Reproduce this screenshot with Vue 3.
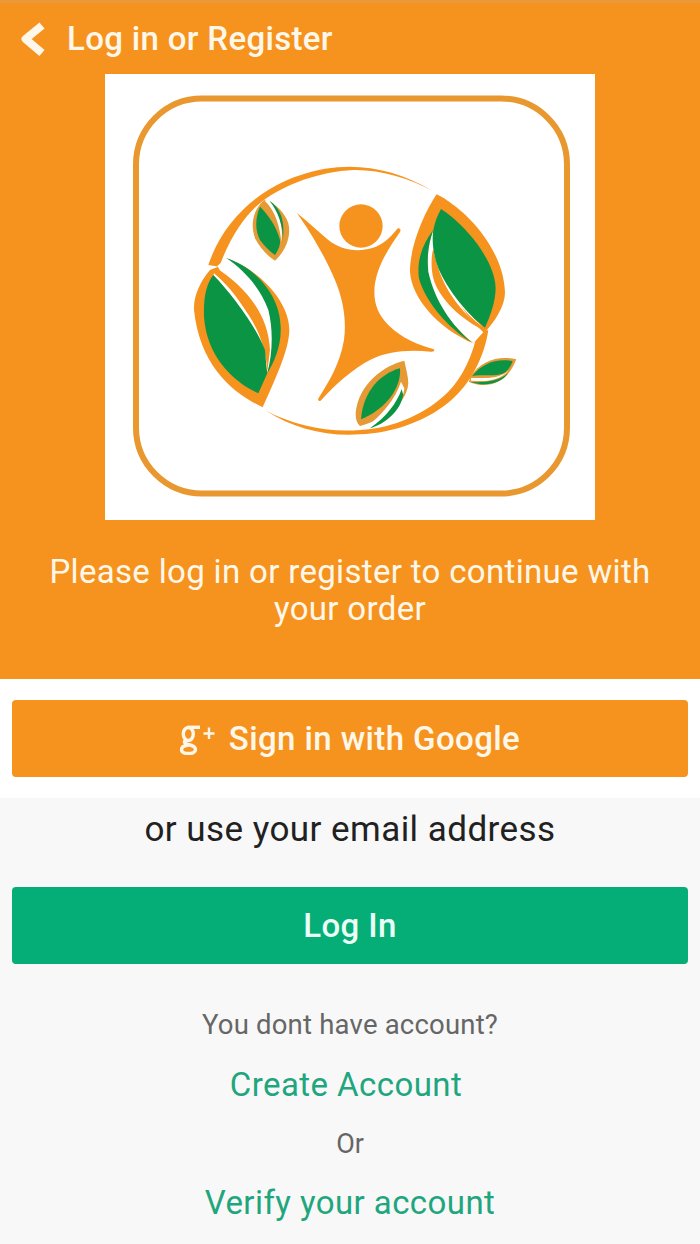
<template>
  <div class="screen">
    <header class="hero">
      <div class="topbar">
        <svg class="back" viewBox="0 0 28 40" aria-hidden="true">
          <path d="M22 6.500 L5.500 20 L22 34" />
        </svg>
        <span class="title">Log in or Register</span>
      </div>

      <svg class="logo" viewBox="0 0 490 446" aria-hidden="true">
        <rect width="490" height="446" fill="#ffffff" />
        <rect x="31" y="24.5" width="431" height="395" rx="66" fill="none" stroke="#e9982f" stroke-width="6" />
        <g transform="translate(75 76) scale(0.3333)">
          <!-- ring -->
          <path class="orange" d="M757 122 C680 75 590 50 510 50 C340 50 150 150 85 345 L118 350 C150 260 200 190 245 155 C320 100 420 65 520 60 C600 58 690 85 757 122 Z" />
          <path class="orange" d="M925 540 C915 610 880 690 820 745 C750 810 640 850 540 853 C440 860 340 835 258 782 C340 825 440 848 540 840 C640 835 740 790 805 725 C850 680 880 610 892 548 Z" />

          <!-- figure -->
          <circle class="orange" cx="543" cy="228" r="65" />
          <path class="orange" d="M350 188 C385 215 415 245 445 270 C480 298 520 305 560 298 C600 292 630 265 652 236 C660 232 664 240 660 246 C630 290 595 340 585 400 C578 450 590 490 625 525 C665 565 715 585 762 598 C765 604 760 606 752 605 C680 598 620 605 570 630 C520 655 465 705 422 752 C416 755 412 750 416 744 C450 690 480 640 492 570 C500 510 490 450 465 390 C440 330 395 250 350 188 Z" />

          <!-- left leaf -->
          <g transform="translate(30 300)">
            <path class="orange" d="M60 60 L84 50 L110 25 C200 55 298 150 298 240 C298 300 250 400 218 472 C130 430 30 350 12 180 C10 140 30 95 60 60 Z" />
            <path class="white" d="M82 48 C95 38 100 30 110 25 C180 65 240 130 248 230 C250 290 245 330 232 368 L200 250 Z" />
            <path class="orange" d="M80 55 C150 100 235 180 240 300 L232 365 C228 290 200 220 150 160 C120 125 90 90 70 72 Z" />
            <path class="white" d="M72 70 C120 110 200 200 230 345 C205 240 130 140 70 76 Z" />
            <path class="green" d="M70 75 C100 105 190 210 225 300 C228 330 228 340 232 370 L205 430 C130 395 50 320 42 200 C40 140 50 100 70 75 Z" />
            <path class="green" d="M110 25 C190 50 270 130 272 230 C275 290 250 340 232 370 C248 310 250 240 235 180 C210 110 160 60 110 25 Z" />
          </g>

          <!-- right leaf -->
          <g transform="translate(675 105)">
            <path class="orange" d="M95 28 C180 70 295 190 300 320 C302 360 270 410 240 442 L205 475 C100 430 20 340 15 260 C15 180 60 80 95 28 Z" />
            <path class="white" d="M85 135 C62 200 62 260 80 310 C110 380 150 430 205 475 L235 442 C150 360 100 260 85 135 Z" />
            <path class="orange" d="M85 190 C100 270 130 350 240 438 C170 405 100 340 85 280 C78 250 78 215 85 190 Z" />
            <path class="white" d="M85 150 C90 230 140 340 232 425 C160 370 100 280 85 190 Z" />
            <path class="green" d="M108 72 C170 110 270 220 272 310 C272 350 255 395 240 428 C190 390 130 320 100 250 C85 210 80 170 85 135 C90 110 98 90 108 72 Z" />
            <path class="green" d="M85 135 C50 180 35 230 42 280 C60 350 130 430 200 472 C140 420 90 350 70 260 C65 210 72 170 85 135 Z" />
          </g>

          <!-- small bottom leaf and small right leaf -->
          <g transform="translate(495 600)">
            <path class="tan" d="M178 32 C120 45 40 100 32 190 C32 205 35 220 45 228 C100 215 185 170 190 100 C190 80 183 55 178 32 Z" />
            <path class="white" d="M168 95 C150 150 110 195 62 232 C120 215 172 175 178 115 Z" />
            <path class="green" d="M165 55 C110 70 55 120 48 208 C80 195 120 170 145 130 C160 105 167 80 165 55 Z" />
            <path class="green" d="M170 118 C155 160 125 200 75 235 C120 222 165 185 175 135 Z" />

            <path class="tan" d="M514 28 C465 16 410 28 376 80 L372 96 C420 116 484 108 514 28 Z" />
            <path class="white" d="M378 84 C420 84 460 88 490 62 C465 92 420 96 378 92 Z" />
            <path class="green" d="M503 33 C452 24 410 42 382 78 C420 72 462 82 482 66 C493 56 499 45 503 33 Z" />
            <path class="green" d="M378 96 C420 110 464 104 490 70 C462 94 420 98 378 96 Z" />
          </g>

          <!-- small top leaf -->
          <g transform="translate(180 120)">
            <path class="tan" d="M72 30 C40 60 30 100 45 145 C60 175 85 200 105 212 C135 185 155 140 145 100 C135 70 110 40 72 30 Z" />
            <path class="white" d="M74 32 C105 60 120 110 124 155 C132 110 115 55 88 32 Z" />
            <path class="green" d="M60 50 C45 85 45 120 60 150 C75 170 90 185 105 195 C115 180 122 165 120 150 C110 110 85 75 60 50 Z" />
            <path class="green" d="M88 32 C118 50 138 90 128 155 C132 110 112 60 88 32 Z" />
          </g>
        </g>
      </svg>

      <p class="intro">Please log in or register to continue with your order</p>
    </header>

    <section class="social">
      <button class="btn btn-google" type="button">
        <svg class="gplus" viewBox="0 0 36 30" aria-hidden="true">
          <ellipse cx="8.300" cy="9" rx="5" ry="6.500" />
          <path d="M7.500 2.300 H20" />
          <path d="M5.500 15.500 C3.500 17 4.500 18.500 8 19.500 C13 20.500 15.500 21.500 15.500 24.500 C15.500 27 12.500 28.500 8.500 28.500 C4 28.500 1.500 27 1.500 24.500 C1.500 22 4.500 20.500 9 20" />
          <path class="gplus-cross" d="M23.500 8.500 H34.500 M29 2.500 V14" />
        </svg>
        <span>Sign in with Google</span>
      </button>
    </section>

    <main class="account">
      <p class="or-email">or use your email address</p>
      <button class="btn btn-login" type="button">Log In</button>
      <p class="hint">You dont have account?</p>
      <a class="link link-create" href="#">Create Account</a>
      <p class="or">Or</p>
      <a class="link" href="#">Verify your account</a>
    </main>
  </div>
</template>

<script setup>
</script>

<style>
html,
body {
  margin: 0;
  background: #f8f8f8;
}
</style>

<style scoped>
.screen {
  width: 700px;
  height: 1244px;
  overflow: hidden;
  display: flex;
  flex-direction: column;
  font-family: Roboto, "Liberation Sans", sans-serif;
  background: #f8f8f8;
}

.hero {
  height: 679px;
  box-sizing: border-box;
  background: #f6931f;
  border-top: 3px solid #e9983a;
  color: #fff8ea;
}

.topbar {
  height: 71px;
  display: flex;
  align-items: center;
  padding-left: 20px;
  gap: 19px;
}

.back {
  width: 28px;
  height: 40px;
  flex: none;
}

.back path {
  fill: none;
  stroke: #fff8ea;
  stroke-width: 8;
  stroke-linejoin: round;
}

.title {
  font-size: 33px;
  font-weight: 500;
  letter-spacing: 0.33px;
  white-space: nowrap;
}

.logo {
  display: block;
  width: 490px;
  height: 446px;
  margin: 0 auto;
}

.orange {
  fill: #f6931f;
}

.tan {
  fill: #e59a35;
}

.green {
  fill: #0c9445;
}

.white {
  fill: #ffffff;
}

.intro {
  margin: 33px 40px 0;
  font-size: 33px;
  line-height: 37px;
  letter-spacing: 0.33px;
  text-align: center;
}

.social {
  height: 119px;
  box-sizing: border-box;
  padding: 21px 12px 0;
  background: #ffffff;
}

.btn {
  width: 100%;
  height: 77px;
  display: flex;
  align-items: center;
  justify-content: center;
  border: 0;
  border-radius: 4px;
  font-family: inherit;
  font-size: 33px;
  font-weight: 500;
  letter-spacing: 0.4px;
  color: #fff8ea;
}

.btn-google {
  background: #f6931f;
  gap: 13px;
}

.gplus {
  width: 36px;
  height: 30px;
  flex: none;
  margin-top: 2px;
}

.gplus ellipse,
.gplus path {
  fill: none;
  stroke: #fff8ea;
  stroke-width: 3.400;
}

.gplus .gplus-cross {
  stroke-width: 2.400;
}

.account {
  flex: 1;
  display: flex;
  flex-direction: column;
  align-items: center;
  padding: 0 12px;
}

.or-email {
  margin: 12px 0 0;
  font-size: 35px;
  line-height: 40px;
  letter-spacing: 0.45px;
  color: #212121;
}

.btn-login {
  margin-top: 37px;
  background: #06ae77;
  color: #eafff6;
}

.hint {
  margin: 45px 0 0;
  font-size: 27.5px;
  line-height: 32px;
  letter-spacing: 0.2px;
  color: #666666;
}

.link {
  margin-top: 25px;
  font-size: 33px;
  line-height: 37px;
  letter-spacing: 0.42px;
  color: #1fa67e;
  text-decoration: none;
}

.link-create {
  margin-right: 8px;
}

.or {
  margin: 26px 0 0;
  font-size: 27px;
  line-height: 30px;
  color: #666666;
}

.or + .link {
  margin-top: 25px;
}
</style>
